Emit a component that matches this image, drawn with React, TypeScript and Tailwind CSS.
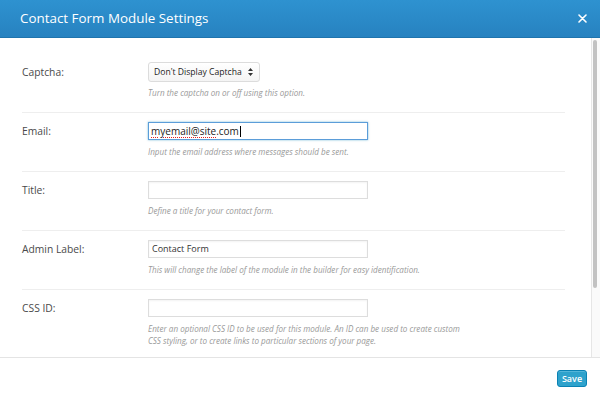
import React from 'react';

const font = { fontFamily: '"Open Sans", "Liberation Sans", sans-serif' };

interface RowProps {
    label: string;
    help: React.ReactNode;
    children: React.ReactNode;
    first?: boolean;
    last?: boolean;
}

const Row: React.FC<RowProps> = ({ label, help, children, first, last }) => (
    <div
        className={`ml-[22px] mr-[26px] flex ${first ? 'pt-[24px]' : 'pt-[9px]'} ${last ? 'pb-[10px]' : 'pb-[13px] border-b border-[#eeeeee]'}`}
    >
        <div className={`w-[126px] shrink-0 text-[10.3px] text-[#4a4a4a] ${first ? 'leading-[20px]' : 'leading-[18px]'}`}>{label}</div>
        <div className="flex flex-col">
            {children}
            <div className={`text-[8.1px] italic text-[#999] leading-[12px] ${first ? 'mt-[5px]' : 'mt-[6px]'}`}>{help}</div>
        </div>
    </div>
);

const TextInput: React.FC<{ value?: string }> = ({ value }) => (
    <div className="w-[220px] h-[18px] border border-[#dddddd] bg-white shadow-[inset_0_1px_2px_rgba(0,0,0,0.05)] px-[3px] flex items-center text-[9px] text-[#333]">
        {value}
    </div>
);

export default function App() {
    return (
        <div className="w-[600px] h-[396px] bg-white flex flex-col overflow-hidden" style={font}>
            {/* Header */}
            <div className="h-[38px] shrink-0 bg-gradient-to-b from-[#2e92d0] to-[#2782c0] border-b border-[#1f74ad] flex items-center justify-between pl-[20px] pr-[12px]">
                <div className="text-white text-[13.4px]">Contact Form Module Settings</div>
                <svg width="9" height="9" viewBox="0 0 9 9" className="mr-[1px]">
                    <path d="M1 1 L8 8 M8 1 L1 8" stroke="white" strokeWidth="1.6" strokeLinecap="round" />
                </svg>
            </div>

            {/* Body */}
            <div className="h-[319px] shrink-0 flex">
                <div className="flex-1 flex flex-col">
                    <Row label="Captcha:" help="Turn the captcha on or off using this option." first>
                        <div className="w-[112px] h-[20px] border border-[#dcdcdc] rounded-[3px] bg-gradient-to-b from-white to-[#f4f4f4] flex items-center justify-between pl-[5px] pr-[6px] text-[8.6px] text-[#222]">
                            <span>Don't Display Captcha</span>
                            <svg width="5" height="8" viewBox="0 0 5 8">
                                <path d="M2.5 0 L5 3 L0 3 Z M2.5 8 L5 5 L0 5 Z" fill="#333" />
                            </svg>
                        </div>
                    </Row>
                    <Row label="Email:" help="Input the email address where messages should be sent.">
                        <div className="w-[220px] h-[18px] border border-[#5b9dd9] bg-white shadow-[0_0_2px_rgba(30,140,190,0.6)] px-[2px] flex items-center text-[10px] text-[#222]">
                            <span className="underline decoration-dotted decoration-[#e02020] underline-offset-[2px]">myemail@site</span>
                            <span>.com</span>
                            <span className="w-px h-[11px] bg-black ml-px" />
                        </div>
                    </Row>
                    <Row label="Title:" help="Define a title for your contact form.">
                        <TextInput />
                    </Row>
                    <Row label="Admin Label:" help="This will change the label of the module in the builder for easy identification.">
                        <TextInput value="Contact Form" />
                    </Row>
                    <Row
                        label="CSS ID:"
                        last
                        help={
                            <>
                                Enter an optional CSS ID to be used for this module. An ID can be used to create custom
                                <br />
                                CSS styling, or to create links to particular sections of your page.
                            </>
                        }
                    >
                        <TextInput />
                    </Row>
                </div>
                {/* Scrollbar */}
                <div className="w-[9px] shrink-0 border-l border-[#e6e6e6] bg-[#fafafa] pt-[2px] pl-[1px]">
                    <div className="w-[4px] h-[248px] rounded-full bg-[#c2c2c2]" />
                </div>
            </div>

            {/* Footer */}
            <div className="flex-1 border-t border-[#e4e4e4] flex justify-end items-start pt-[12px] pr-[13px]">
                <button className="w-[30px] h-[17px] rounded-[3px] bg-[#2ea2cc] border border-[#0a82b4] text-white text-[9px] font-semibold leading-none shadow-[inset_0_1px_0_rgba(120,200,230,0.5)]">
                    Save
                </button>
            </div>
        </div>
    );
}
